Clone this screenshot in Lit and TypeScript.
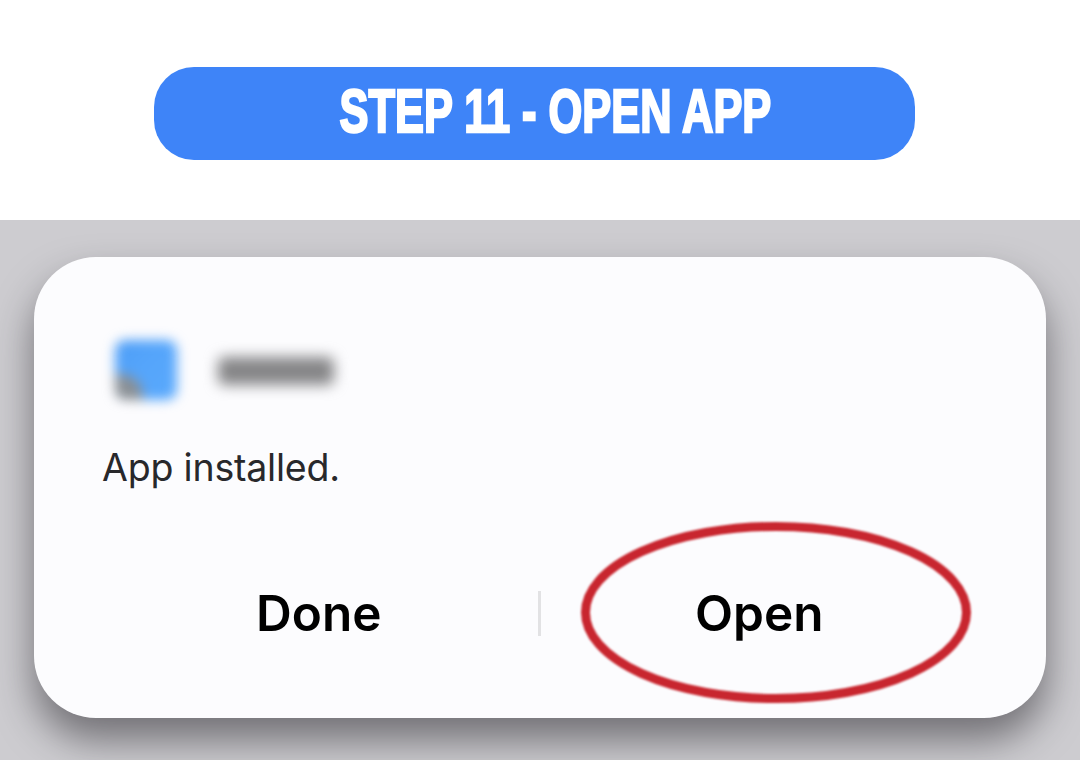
import { LitElement, html, css } from 'lit';
import { customElement } from 'lit/decorators.js';

@customElement('app-root')
export class AppRoot extends LitElement {
  render() {
    return html`
      <header class="top">
        <div class="banner"><span class="banner-text">STEP 11 - OPEN APP</span></div>
      </header>
      <section class="backdrop">
        <div class="dialog">
          <div class="app-row">
            <div class="app-icon"><div class="app-icon-corner"></div></div>
            <div class="app-name"></div>
          </div>
          <p class="message">App installed.</p>
          <div class="actions">
            <div class="action">Done</div>
            <div class="divider"></div>
            <div class="action open">
              Open
              <svg class="ring" width="440" height="186" viewBox="0 0 440 186" aria-hidden="true">
                <ellipse cx="237" cy="92.5" rx="190.5" ry="86" fill="none" stroke="#c8262f" stroke-width="9"></ellipse>
              </svg>
            </div>
          </div>
        </div>
      </section>
    `;
  }

  static styles = css`
    :host {
      display: block;
      width: 1080px;
      height: 760px;
      overflow: hidden;
      background: #fff;
      font-family: Inter, Roboto, sans-serif;
    }
    .top {
      height: 220px;
      box-sizing: border-box;
      padding: 67px 165px 0 154px;
    }
    .banner {
      height: 93px;
      box-sizing: border-box;
      background: #3e84f8;
      border-radius: 40px;
      display: flex;
      align-items: center;
      justify-content: center;
      padding: 0 0 5px 41px;
      overflow: hidden;
    }
    .banner-text {
      display: inline-block;
      flex: none;
      font-family: 'Liberation Sans', Arial, sans-serif;
      font-weight: 700;
      font-size: 62px;
      line-height: 1;
      color: #fff;
      white-space: nowrap;
      -webkit-text-stroke: 2.5px #fff;
      transform: scaleX(0.7);
    }
    .backdrop {
      height: 540px;
      box-sizing: border-box;
      padding: 37px 34px 0;
      background: #cdccd0;
    }
    .dialog {
      height: 461px;
      box-sizing: border-box;
      padding: 83px 68px 0 66px;
      background: #fcfcfe;
      border-radius: 62px;
      box-shadow: 0 22px 38px rgba(40, 38, 44, 0.55);
    }
    .app-row {
      display: flex;
      align-items: center;
      gap: 41px;
      padding-left: 15px;
      height: 60px;
    }
    .app-icon {
      position: relative;
      width: 62px;
      height: 60px;
      border-radius: 10px;
      background: linear-gradient(135deg, #4d9df6 0%, #55a5fb 45%, #5aa9fc 100%);
      filter: blur(6px);
      overflow: hidden;
    }
    .app-icon-corner {
      position: absolute;
      left: -6px;
      bottom: -6px;
      width: 34px;
      height: 32px;
      background: #8a9096;
      border-radius: 0 22px 0 0;
    }
    .app-name {
      width: 116px;
      height: 28px;
      margin-top: 2px;
      background: #858587;
      border-radius: 6px;
      filter: blur(7px);
    }
    .message {
      margin: 43px 0 0 2px;
      font-size: 37.5px;
      line-height: 50px;
      letter-spacing: -0.2px;
      color: #28282b;
    }
    .actions {
      display: flex;
      align-items: center;
      height: 46px;
      margin-top: 97px;
    }
    .action {
      position: relative;
      flex: 1;
      text-align: center;
      font-size: 49.5px;
      line-height: 46px;
      font-weight: 600;
      color: #000;
    }
    .divider {
      flex: none;
      width: 3px;
      height: 45px;
      background: #e2e2e4;
    }
    .ring {
      position: absolute;
      left: 50%;
      top: 50%;
      transform: translate(-50%, -50%);
      filter: blur(0.8px);
    }
  `;
}
